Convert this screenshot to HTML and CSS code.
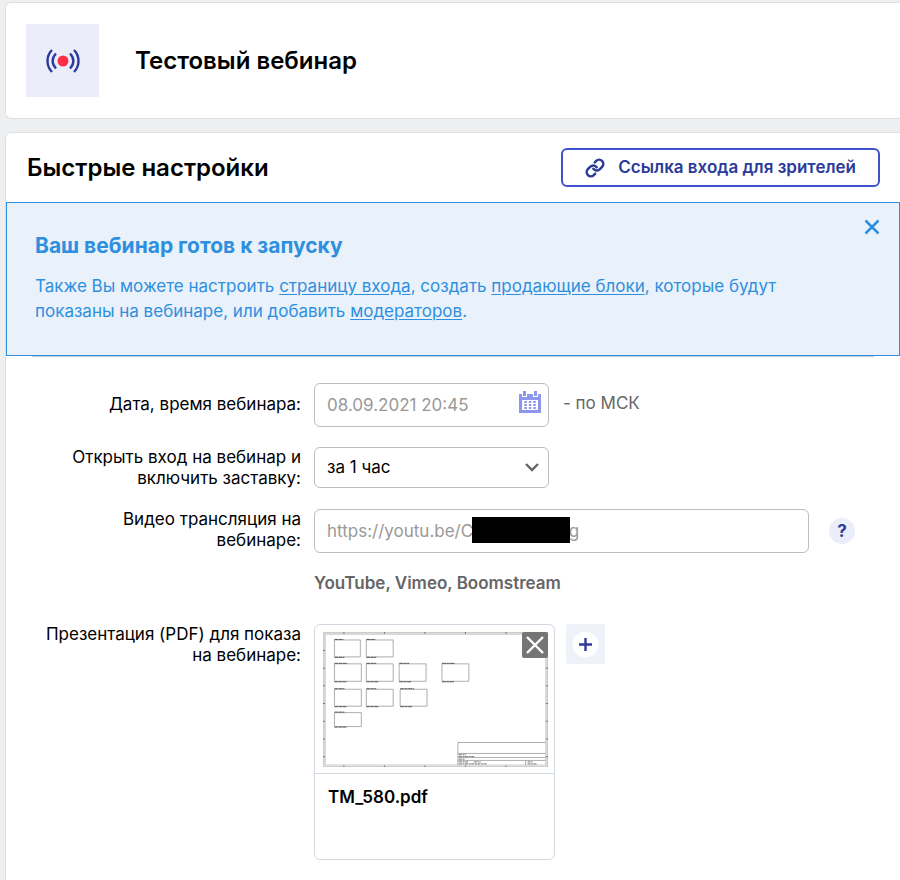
FILE: index.html
```html
<!DOCTYPE html>
<html lang="ru">
<head>
  <meta charset="UTF-8" />
  <title>Тестовый вебинар</title>
  <meta name="viewport" content="width=device-width, initial-scale=1" />
  <link rel="stylesheet" href="styles.css">
</head>
<body>

  <header class="panel webinar-head">
    <div class="webinar-icon">
      <svg width="36" height="26" viewBox="0 0 36 26" fill="none" stroke="#2b3a9b" stroke-width="2.4" aria-hidden="true">
        <path d="M7 2C1 8 1 18 7 24M11 5.500C6.500 10 6.500 16 11 20.500M29 2C35 8 35 18 29 24M25 5.500C29.500 10 29.500 16 25 20.500" />
        <circle cx="18" cy="13" r="5.500" fill="#ff2d46" stroke="none" />
      </svg>
    </div>
    <h1 class="title">Тестовый вебинар</h1>
  </header>

  <main class="panel">
    <div class="settings-head">
      <h2 class="title">Быстрые настройки</h2>
      <button type="button" class="btn-link">
        <svg width="20" height="20" viewBox="0 0 24 24" fill="none" stroke="currentColor" stroke-width="3" stroke-linecap="round" stroke-linejoin="round" aria-hidden="true">
          <path d="M10 13a5 5 0 0 0 7.540.540l3-3a5 5 0 0 0-7.070-7.070l-1.720 1.710" />
          <path d="M14 11a5 5 0 0 0-7.540-.540l-3 3a5 5 0 0 0 7.070 7.070l1.710-1.710" />
        </svg>
        Ссылка входа для зрителей
      </button>
    </div>

    <section class="notice">
      <h3>Ваш вебинар готов к запуску</h3>
      <p>Также Вы можете настроить <a href="#">страницу входа</a>, создать <a href="#">продающие блоки</a>, которые будут показаны на вебинаре, или добавить <a href="#">модераторов</a>.</p>
      <button type="button" class="notice-close" aria-label="Закрыть">
        <svg width="16" height="16" viewBox="0 0 16 16" stroke="currentColor" stroke-width="2.500" aria-hidden="true"><path d="M1.500 1.500l13 13M14.500 1.500l-13 13" /></svg>
      </button>
    </section>

    <form class="settings">
      <label class="label label-single" for="date">Дата, время вебинара:</label>
      <div class="row">
        <div class="field field-short">
          <input type="text" id="date" class="input" value="08.09.2021 20:45">
          <svg class="calendar" width="22" height="22" viewBox="0 0 22 22" aria-hidden="true">
            <path fill="#8c96ec" fill-rule="evenodd" d="M0 3h3v3h5V3h6v3h5V3h3v19H0zM3 9v10h16V9z" />
            <path fill="#8c96ec" d="M4 0h3v5H4zM15 0h3v5h-3z" />
            <path stroke="#8c96ec" stroke-width="2" stroke-dasharray="2.500 2" d="M5.300 11h11.500M5.300 14h11.500M5.300 17h11.500" />
          </svg>
        </div>
        <span class="zone">- по МСК</span>
      </div>

      <label class="label" for="open">Открыть вход на вебинар и включить заставку:</label>
      <div class="row">
        <div class="field field-short">
          <select id="open" class="input select">
            <option>за 1 час</option>
          </select>
          <svg class="arrow" width="14" height="9" viewBox="0 0 14 9" fill="none" stroke="#666" stroke-width="2.400" aria-hidden="true"><path d="M1 1l6 6 6-6" /></svg>
        </div>
      </div>

      <label class="label" for="video">Видео трансляция на вебинаре:</label>
      <div class="video">
        <div class="row row-video">
          <div class="field field-long">
            <input type="text" id="video" class="input" value="https://youtu.be/C&nbsp;&nbsp;&nbsp;&nbsp;&nbsp;&nbsp;&nbsp;&nbsp;&nbsp;&nbsp;&nbsp;&nbsp;&nbsp;&nbsp;&nbsp;&nbsp;&nbsp;&nbsp;&nbsp;&nbsp;g">
            <span class="mask"></span>
          </div>
          <button type="button" class="help">?</button>
        </div>
        <p class="hint">YouTube, Vimeo, Boomstream</p>
      </div>

      <span class="label">Презентация (PDF) для показа на вебинаре:</span>
      <div class="files">
        <div class="file">
          <div class="preview">
            <svg class="sheet" viewBox="0 0 226 136" fill="none" stroke="#999" aria-hidden="true">
              <rect x="1" y="1" width="224" height="134" stroke="#dcdcdc" stroke-width="2" />
              <path stroke="#bbb" stroke-width=".6" d="M0 .3h226M0 135.500h226M.3 0v136M225.500 0v136M2.500 2.500h221v131h-221z" />
              <path stroke="#777" stroke-width="2" stroke-dasharray="1 39.700" d="M20.500 1h203M20.500 135h203" />
              <path stroke="#777" stroke-width="2" stroke-dasharray="1 16.800" d="M1 18v110M225 18v110" />
              <g stroke-width=".8">
                <path d="M11.500 8h26v17h-26zM43.500 8h27v17h-27z" />
                <path d="M11.500 32h27v17.500h-27zM43.500 32h27v17.500h-27zM76.500 32h27v17.500h-27zM119.500 32h27v17.500h-27z" />
                <path d="M11.500 57.500h27v17h-27zM43.500 57.500h27v17h-27zM77.500 57.500h27v17h-27z" />
                <path d="M11.500 81h27v14h-27z" />
                <path d="M223.500 111H135.500v23M135.500 122h88M135.500 126h88M135.500 129h88M203.500 129v5" />
              </g>
              <path stroke="#555" stroke-width="1" stroke-dasharray="4 .5 3 .5" d="M11.500 7.500h9M43.500 7.500h9M11.500 25.500h10M43.500 25.500h10M11.500 31.500h13M43.500 31.500h10M76.500 31.500h10M119.500 31.500h13M11.500 50h12M43.500 50h12M76.500 50h12M119.500 50h12M11.500 57h10M43.500 57h10M77.500 57h14M11.500 75h12M43.500 75h12M77.500 75h12M11.500 80.500h10M11.500 95.500h12" />
              <path stroke="#777" stroke-width="1" stroke-dasharray="3 .7 2 .5" d="M136.500 123.300h7M136.500 125.200h16M136.500 127.700h6M136.500 130.500h10M151.500 130.500h7M136.500 132.500h28M205.500 130.500h5M205.500 132.500h9" />
            </svg>
            <button type="button" class="file-remove" aria-label="Удалить">
              <svg width="18" height="18" viewBox="0 0 18 18" stroke="#fff" stroke-width="2.400" aria-hidden="true"><path d="M1 1l16 16M17 1L1 17" /></svg>
            </button>
          </div>
          <div class="file-name">TM_580.pdf</div>
        </div>
        <button type="button" class="file-add" aria-label="Добавить">
          <svg width="27" height="27" viewBox="0 0 27 27" aria-hidden="true">
            <circle cx="13.500" cy="13.500" r="13" fill="#fff" />
            <path stroke="#2b3a9b" stroke-width="2.400" d="M13.500 7v13M7 13.500h13" />
          </svg>
        </button>
      </div>
    </form>
  </main>

</body>
</html>
```

FILE: styles.css
```css
:root {
  --color-bg: #eeeff1;
  --color-border: #dfe0e3;
  --color-primary: #2b3a9b;
  --color-primary-light: #ebedfb;
  --color-notice: #2f8fdf;
  --color-notice-bg: #e9f1fb;
  --color-muted: #666;
  --radius: 6px;
}

* {
  box-sizing: border-box;
}

body {
  margin: 0;
  padding: 2px 0 0 5px;
  min-height: 100vh;
  display: flex;
  flex-direction: column;
  gap: 13px;
  background-color: var(--color-bg);
  font-family: Inter, "Open Sans", sans-serif;
  font-size: 17px;
  line-height: 21px;
  color: #000;
}

button,
input,
select {
  font: inherit;
}

button {
  display: flex;
  align-items: center;
  justify-content: center;
  padding: 0;
  border: none;
  cursor: pointer;
}

.panel {
  background-color: #fff;
  border: 1px solid var(--color-border);
  border-right: none;
  border-radius: var(--radius) 0 0 var(--radius);
}

main.panel {
  flex: 1;
  border-bottom: none;
  border-bottom-left-radius: 0;
}

.title {
  margin: 0;
  font-size: 24px;
  line-height: 28px;
  font-weight: 600;
}

.webinar-head {
  display: flex;
  align-items: center;
  gap: 36px;
  padding: 21px 20px;
}

.webinar-icon {
  display: flex;
  align-items: center;
  justify-content: center;
  width: 73px;
  height: 73px;
  background-color: var(--color-primary-light);
}

.settings-head {
  display: flex;
  align-items: center;
  justify-content: space-between;
  padding: 15px 20px 15px 21px;
}

.btn-link {
  gap: 13px;
  height: 39px;
  padding: 0 22px;
  border: 2px solid #4052ce;
  border-radius: var(--radius);
  background-color: #fff;
  color: var(--color-primary);
  font-weight: 600;
}

.notice {
  position: relative;
  padding: 29px 90px 31px 28px;
  border: 1px solid var(--color-notice);
  background-color: var(--color-notice-bg);
  color: var(--color-notice);
}

.notice h3 {
  margin: 0 0 14px;
  font-size: 21px;
  line-height: 28px;
  font-weight: 700;
}

.notice p {
  margin: 0;
  line-height: 25px;
}

.notice a {
  color: inherit;
  text-underline-offset: 2px;
}

.notice-close {
  position: absolute;
  top: 16px;
  right: 19px;
  background: none;
  color: inherit;
}

.settings {
  display: grid;
  grid-template-columns: 33% 1fr;
  column-gap: 13px;
  row-gap: 20px;
}

.settings::before {
  content: "";
  grid-column: 1 / -1;
  height: 1px;
  margin: 0 26px 6px;
  background-color: #c5c8cc;
}

.label {
  padding-left: 35px;
  text-align: right;
}

.label-single {
  padding-top: 11px;
}

.row {
  display: flex;
  gap: 14px;
}

.row-video {
  align-items: center;
  gap: 20px;
}

.field {
  position: relative;
}

.field-short {
  width: 235px;
}

.field-long {
  width: 495px;
}

.input {
  display: block;
  width: 100%;
  height: 44px;
  padding: 0 12px;
  border: 1px solid #bdbdbd;
  border-radius: var(--radius);
  background-color: #fff;
  color: #999;
}

.select {
  height: 41px;
  appearance: none;
  color: #000;
}

.calendar {
  position: absolute;
  top: 8px;
  right: 8px;
}

.arrow {
  position: absolute;
  top: 16px;
  right: 10px;
  pointer-events: none;
}

.mask {
  position: absolute;
  top: 8px;
  left: 158px;
  width: 98px;
  height: 26px;
  background-color: #000;
}

.zone {
  padding-top: 10px;
  color: var(--color-muted);
}

.help {
  width: 26px;
  height: 26px;
  border-radius: 50%;
  background-color: var(--color-primary-light);
  color: var(--color-primary);
  font-weight: 700;
}

.hint {
  margin: 20px 0 10px;
  color: var(--color-muted);
  font-weight: 600;
}

.files {
  display: flex;
  align-items: flex-start;
  gap: 11px;
}

.file {
  width: 241px;
  height: 236px;
  border: 1px solid #d3d9e3;
  border-radius: var(--radius);
}

.preview {
  position: relative;
  padding: 7px 6px 6px 8px;
  border-bottom: 1px solid #d3d9e3;
}

.sheet {
  display: block;
  width: 100%;
}

.file-remove {
  position: absolute;
  top: 7px;
  right: 6px;
  width: 26px;
  height: 26px;
  border-radius: 2px;
  background-color: #757575;
}

.file-name {
  padding: 13px;
  font-weight: 600;
}

.file-add {
  width: 39px;
  height: 40px;
  border-radius: 2px;
  background-color: #eff2f8;
}
```
